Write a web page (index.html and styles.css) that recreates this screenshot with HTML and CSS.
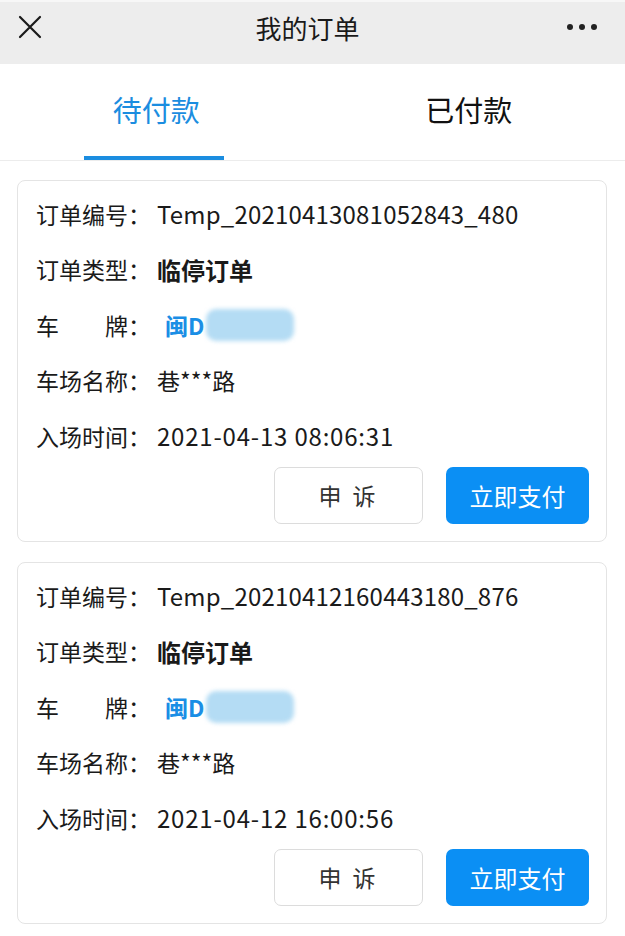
FILE: index.html
```html
<!DOCTYPE html>
<html lang="zh-CN">
<head>
<meta charset="utf-8">
<link rel="stylesheet" href="styles.css">
</head>
<body>
<div class="app">
  <header class="nav">
    <svg class="close" width="24" height="24" viewBox="0 0 24 24"><path d="M2 2 L22 22 M22 2 L2 22" stroke="#1a1a1a" stroke-width="2.2" fill="none" stroke-linecap="round"/></svg>
    <div class="title">我的订单</div>
    <div class="more"><span></span><span></span><span></span></div>
  </header>
  <nav class="tabs">
    <div class="tab active">待付款</div>
    <div class="tab">已付款</div>
  </nav>
  <main class="list">
    <section class="card">
      <div class="row"><span class="label">订单编号：</span><span class="val latin">Temp_20210413081052843_480</span></div>
      <div class="row"><span class="label">订单类型：</span><span class="val bold">临停订单</span></div>
      <div class="row"><span class="label plate-label"><span>车</span><span>牌：</span></span><span class="val plate">闽D<span class="blur"></span></span></div>
      <div class="row"><span class="label">车场名称：</span><span class="val">巷***路</span></div>
      <div class="row"><span class="label">入场时间：</span><span class="val latin date">2021-04-13 08:06:31</span></div>
      <div class="actions">
        <button class="btn ghost">申 诉</button>
        <button class="btn primary">立即支付</button>
      </div>
    </section>
    <section class="card">
      <div class="row"><span class="label">订单编号：</span><span class="val latin">Temp_20210412160443180_876</span></div>
      <div class="row"><span class="label">订单类型：</span><span class="val bold">临停订单</span></div>
      <div class="row"><span class="label plate-label"><span>车</span><span>牌：</span></span><span class="val plate">闽D<span class="blur"></span></span></div>
      <div class="row"><span class="label">车场名称：</span><span class="val">巷***路</span></div>
      <div class="row"><span class="label">入场时间：</span><span class="val latin date">2021-04-12 16:00:56</span></div>
      <div class="actions">
        <button class="btn ghost">申 诉</button>
        <button class="btn primary">立即支付</button>
      </div>
    </section>
  </main>
</div>
</body>
</html>
```

FILE: styles.css
```css
* { box-sizing: border-box; }
html, body { margin: 0; padding: 0; background: #fff; }
body {
  font-family: "Noto Sans CJK SC", "Noto Sans", sans-serif;
  color: #1a1a1a;
  width: 625px;
}
.nav {
  height: 64px;
  background: #ededed;
  border-top: 2px solid #f7f7f7;
  display: flex;
  align-items: center;
  justify-content: space-between;
  padding: 0 28px 12px 18px;
}
.close { width: 24px; height: 24px; }
.title { font-size: 26px; color: #1a1a1a; margin-left: 6px; }
.more { display: flex; gap: 6px; }
.more span { width: 6px; height: 6px; border-radius: 50%; background: #222; }
.tabs {
  display: flex;
  height: 97px;
  border-bottom: 1px solid #ececec;
}
.tab {
  flex: 1;
  display: flex;
  align-items: center;
  justify-content: center;
  font-size: 29px;
  color: #111;
  position: relative;
  padding-bottom: 6px;
}
.tab.active { color: #1b8de0; }
.tab.active::after {
  content: "";
  position: absolute;
  bottom: 0;
  left: 50%;
  width: 140px;
  margin-left: -72px;
  height: 4px;
  background: #1b8de0;
}
.list {
  padding: 19px 18px 0 17px;
  display: flex;
  flex-direction: column;
  gap: 20px;
}
.card {
  border: 1px solid #e4e4e4;
  border-radius: 8px;
  padding: 5px 17px 17px 18px;
  height: 362px;
}
.row {
  height: 55.5px;
  display: flex;
  align-items: center;
  font-size: 23px;
}
.label { width: 121px; flex: none; color: #1a1a1a; }
.plate-label { display: flex; justify-content: space-between; width: 115px; margin-right: 6px; }
.val { color: #1a1a1a; }
.latin { font-size: 24px; letter-spacing: 0.2px; }
.date { letter-spacing: 0.8px; }
.bold { font-weight: 700; font-size: 24px; }
.plate { color: #1a8ee5; font-weight: 700; display: flex; align-items: center; margin-left: 8px; }
.blur {
  display: inline-block;
  width: 88px;
  height: 32px;
  margin-left: 2px;
  background: #b4dcf4;
  border-radius: 10px;
  filter: blur(2px);
}
.actions {
  display: flex;
  justify-content: flex-end;
  gap: 23px;
  margin-top: 3px;
}
.btn {
  height: 57px;
  border-radius: 7px;
  font-family: "Noto Sans CJK SC", "Noto Sans", sans-serif;
  font-size: 23px;
  cursor: pointer;
}
.ghost {
  width: 149px;
  background: #fff;
  border: 1px solid #dcdcdc;
  color: #333;
  letter-spacing: 3px;
}
.primary {
  width: 143px;
  background: #0b8ff4;
  border: none;
  color: #fff;
  font-size: 24px;
}
```
